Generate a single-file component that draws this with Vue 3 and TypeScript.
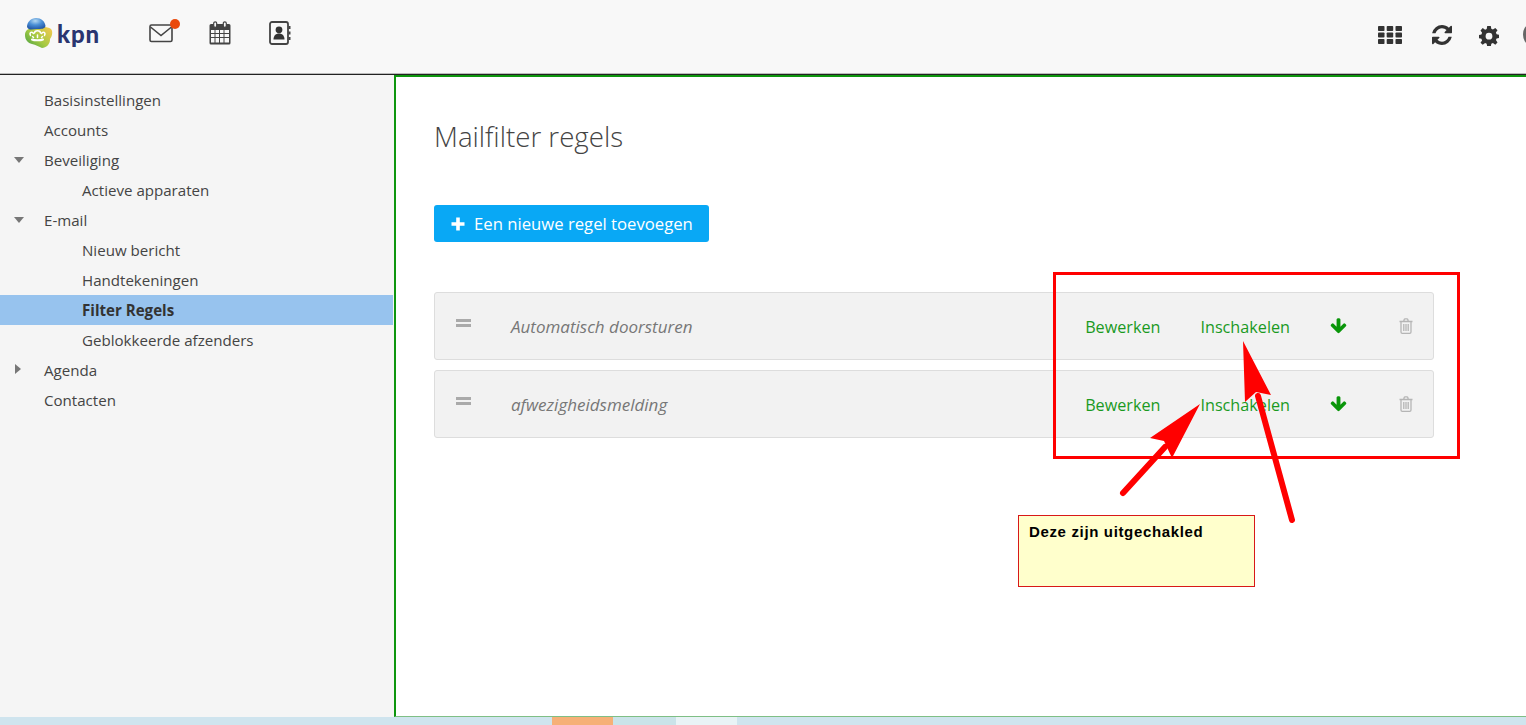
<script setup lang="ts">
interface NavItem { label: string; level: number; caret?: 'open' | 'closed'; active?: boolean }
const nav: NavItem[] = [
  { label: 'Basisinstellingen', level: 0 },
  { label: 'Accounts', level: 0 },
  { label: 'Beveiliging', level: 0, caret: 'open' },
  { label: 'Actieve apparaten', level: 1 },
  { label: 'E-mail', level: 0, caret: 'open' },
  { label: 'Nieuw bericht', level: 1 },
  { label: 'Handtekeningen', level: 1 },
  { label: 'Filter Regels', level: 1, active: true },
  { label: 'Geblokkeerde afzenders', level: 1 },
  { label: 'Agenda', level: 0, caret: 'closed' },
  { label: 'Contacten', level: 0 },
]
const rules = ['Automatisch doorsturen', 'afwezigheidsmelding']
</script>

<template>
  <div class="page">
    <header class="top">
      <div class="logo">
        <svg width="30" height="32" viewBox="0 0 30 32">
          <defs>
            <linearGradient id="lg1" x1="0" y1="1" x2="1" y2="0.200">
              <stop offset="0" stop-color="#3c9a45" />
              <stop offset="0.5" stop-color="#a4ca42" />
              <stop offset="1" stop-color="#ecc94e" />
            </linearGradient>
            <radialGradient id="lg2" cx="0.450" cy="0.250" r="0.800">
              <stop offset="0" stop-color="#b5d9f2" />
              <stop offset="0.450" stop-color="#4a8fd6" />
              <stop offset="1" stop-color="#1d4f9f" />
            </radialGradient>
          </defs>
          <path d="M1 18 C1 14 4 11 8 12 C13 10 23 9 27 12 C29 14 28.500 19 26 22 C26.500 27 22 31 18 31 C14 29 12 28 8 27 C4 26 1 23 1 18Z" fill="url(#lg1)" />
          <path d="M3 10 C3 5 7 1 12 1 C17 1 21 4 21.500 9 C21 12 17 12 13 12 C9 12 5 14 3 10Z" fill="url(#lg2)" />
          <g fill="none" stroke="#fff" stroke-width="1.500" stroke-linecap="round">
            <path d="M6.500 18.500 C5 15.500 8 14 9.500 16.500" />
            <path d="M10.500 16 C10.500 13 16.500 13 16.500 16" />
            <path d="M17.500 16.500 C19 14 22 15.500 20.500 18.500" />
            <path d="M8 22.500 C10 23.500 17 23.500 19 22.500" stroke-width="2" />
            <path d="M8.500 19.500 L9.500 20.500 M13.500 18 V20.500 M18.500 19.500 L17.500 20.500" />
          </g>
        </svg>
        <span class="kpn">kpn</span>
      </div>
      <nav class="apps">
        <span class="ico mail">
          <svg width="24" height="20" viewBox="0 0 24 20" fill="none" stroke="#444" stroke-width="1.600">
            <rect x="1" y="2" width="22" height="16.500" rx="1.500" />
            <path d="M1.500 4 L12 12.500 L22.500 4" />
          </svg>
          <i class="dot"></i>
        </span>
        <span class="ico">
          <svg width="22" height="24" viewBox="0 0 22 24">
            <path d="M2 3h18a1.500 1.500 0 0 1 1.500 1.500V22a1.500 1.500 0 0 1-1.500 1.500H2A1.500 1.500 0 0 1 .5 22V4.500A1.500 1.500 0 0 1 2 3z" fill="#444" />
            <path d="M2 9h3.500v3H2zM6.500 9H10v3H6.500zM11 9h3.500v3H11zM15.500 9H20v3h-4.500zM2 13h3.500v3H2zM6.500 13H10v3H6.500zM11 13h3.500v3H11zM15.500 13H20v3h-4.500zM2 17h3.500v4.500H2zM6.500 17H10v4.500H6.500zM11 17h3.500v4.500H11zM15.500 17H20v4.500h-4.500z" fill="#f8f8f8" />
            <rect x="4.700" y="0.800" width="3" height="5.500" rx="1.500" fill="#f8f8f8" stroke="#444" stroke-width="1.200" />
            <rect x="14.300" y="0.800" width="3" height="5.500" rx="1.500" fill="#f8f8f8" stroke="#444" stroke-width="1.200" />
          </svg>
        </span>
        <span class="ico">
          <svg width="22" height="24" viewBox="0 0 22 24">
            <rect x="1" y="1" width="18" height="22" rx="2" fill="none" stroke="#444" stroke-width="1.800" />
            <circle cx="10" cy="8.800" r="3.400" fill="#333" />
            <path d="M4.500 18.500c0-4 2.500-6 5.500-6s5.500 2 5.500 6z" fill="#333" />
            <path d="M19.500 5h2v3h-2zM19.500 10.500h2v3h-2zM19.500 16h2v3h-2z" fill="#444" />
          </svg>
        </span>
      </nav>
      <div class="tools">
        <svg class="t1" width="24" height="18" viewBox="0 0 24 18" fill="#333">
          <rect x="0" y="0" width="6.500" height="5" rx="0.800" /><rect x="8.700" y="0" width="6.500" height="5" rx="0.800" /><rect x="17.500" y="0" width="6.500" height="5" rx="0.800" />
          <rect x="0" y="6.500" width="6.500" height="5" rx="0.800" /><rect x="8.700" y="6.500" width="6.500" height="5" rx="0.800" /><rect x="17.500" y="6.500" width="6.500" height="5" rx="0.800" />
          <rect x="0" y="13" width="6.500" height="5" rx="0.800" /><rect x="8.700" y="13" width="6.500" height="5" rx="0.800" /><rect x="17.500" y="13" width="6.500" height="5" rx="0.800" />
        </svg>
        <svg class="t2" width="20" height="20" viewBox="0 0 1536 1536" fill="#333">
          <path d="M1511 928q0 5-1 7-64 268-268 434.500T764 1536q-146 0-282.500-55T238 1324l-129 129q-19 19-45 19t-45-19-19-45V960q0-26 19-45t45-19h448q26 0 45 19t19 45-19 45l-137 137q71 66 161 102t187 36q134 0 250-65t186-179q11-17 53-117 8-23 30-23h192q13 0 22.500 9.500t9.500 22.500zm25-800v448q0 26-19 45t-45 19h-448q-26 0-45-19t-19-45 19-45l138-138Q969 256 768 256q-134 0-250 65T332 500q-11 17-53 117-8 23-30 23H50q-13 0-22.500-9.500T18 608v-7q65-268 270-434.500T768 0q146 0 284 55.500T1297 212l130-129q19-19 45-19t45 19 19 45z" />
        </svg>
        <svg class="t3" width="20" height="20" viewBox="0 0 20 20">
          <path fill="#333" fill-rule="evenodd" d="M8.200 0h3.600l.5 2.800 1.600.7L16.300 1.900l2.200 2.300-1.600 2.300.7 1.700 2.400.5v3.200l-2.400.5-.7 1.700 1.600 2.300-2.200 2.300-2.400-1.600-1.600.7-.5 2.900H8.200l-.5-2.900-1.600-.7-2.400 1.600L1.500 16.700l1.600-2.300-.7-1.700L0 12.200V8.900l2.400-.5.700-1.700-1.600-2.300 2.200-2.300 2.400 1.600 1.600-.7zM10 6.800a3.400 3.400 0 1 0 0 6.800 3.400 3.400 0 0 0 0-6.800z" />
        </svg>
      </div>
      <i class="cut"></i>
    </header>

    <div class="body">
      <aside class="side">
        <div
          v-for="n in nav"
          :key="n.label"
          class="nav-item"
          :class="[`lvl${n.level}`, { active: n.active }]"
        >
          <i v-if="n.caret" class="caret" :class="n.caret"></i>
          {{ n.label }}
        </div>
      </aside>

      <main class="main">
        <h1 class="title">Mailfilter regels</h1>
        <button class="add">
          <svg width="14" height="14" viewBox="0 0 14 14" fill="#fff"><path d="M5.200 0.500h3.600v4.700h4.700v3.600H8.800v4.700H5.200V8.800H.5V5.200h4.700z" /></svg>
          Een nieuwe regel toevoegen
        </button>
        <div class="rules">
          <div v-for="r in rules" :key="r" class="rule">
            <span class="grip"><i></i><i></i></span>
            <span class="name">{{ r }}</span>
            <a class="act">Bewerken</a>
            <a class="act enable">Inschakelen</a>
            <svg class="move" width="17" height="18" viewBox="0 0 1664 1792" fill="#0a960a">
              <path d="M1611 832q0 53-37 90l-651 652q-39 37-91 37-53 0-90-37l-651-652q-38-36-38-90 0-53 38-91l74-75q39-37 91-37 53 0 90 37l294 295v-708q0-52 38-90t90-38h128q52 0 90 38t38 90v708l294-295q37-37 90-37 52 0 91 37l75 75q37 39 37 91z" />
            </svg>
            <svg class="trash" width="14" height="16" viewBox="0 0 14 16" fill="none" stroke="#b5b5b5" stroke-width="1.300">
              <path d="M0.500 3.500h13M2 3.500V14a1.300 1.300 0 0 0 1.300 1.300h7.400A1.300 1.300 0 0 0 12 14V3.500M4.700 3.300 5.300 1.300A.8.8 0 0 1 6 .8h2a.8.8 0 0 1 .7.5l.6 2M4.800 6v7M7 6v7M9.200 6v7" />
            </svg>
          </div>
        </div>
      </main>
    </div>

    <footer class="strip">
      <i class="s-orange"></i>
      <i class="s-a"></i>
      <i class="s-light"></i>
    </footer>

    <div class="mark-box"></div>
    <svg class="arrows" width="1526" height="725" viewBox="0 0 1526 725">
      <path d="M1123 493 L1165 447" stroke="#f00" stroke-width="6" stroke-linecap="round" fill="none" />
      <path d="M1200 404 L1150 438 L1164 441 L1172 458Z" fill="#f00" />
      <path d="M1292 520 L1258 396" stroke="#f00" stroke-width="6" stroke-linecap="round" fill="none" />
      <path d="M1243 341 L1245 402 L1256 392 L1271 395Z" fill="#f00" />
    </svg>
    <div class="note">Deze zijn uitgechakled</div>
  </div>
</template>

<style>
html, body { margin: 0; padding: 0; overflow: hidden; }
</style>

<style scoped>
.page {
  position: relative;
  width: 1526px;
  height: 725px;
  overflow: hidden;
  display: flex;
  flex-direction: column;
  background: #fff;
  font-family: "Open Sans", "Liberation Sans", sans-serif;
  color: #444;
}
.top {
  position: relative;
  flex: 0 0 75px;
  box-sizing: border-box;
  height: 75px;
  background: #f8f8f8;
  border-bottom: 1px solid #222;
  box-shadow: inset 0 -1px 0 #bbb;
  display: flex;
  align-items: flex-start;
}
.logo {
  display: flex;
  align-items: center;
  margin: 17px 0 0 24px;
  width: 125px;
  height: 32px;
}
.kpn {
  font-family: "Lato", "Open Sans", sans-serif;
  font-weight: 900;
  font-size: 24px;
  line-height: 32px;
  color: #2a3570;
  margin-left: 3px;
  margin-top: 1px;
  letter-spacing: 0.800px;
}
.apps {
  display: flex;
  gap: 36px;
  margin-top: 21px;
  align-items: flex-start;
}
.ico { position: relative; display: block; width: 24px; height: 24px; }
.mail svg { display: block; margin-top: 2px; }
.dot {
  position: absolute;
  top: -2px;
  left: 21px;
  width: 10px;
  height: 10px;
  border-radius: 50%;
  background: #ea4a0c;
}
.tools {
  margin-left: auto;
  margin-right: 27px;
  display: flex;
  align-items: flex-start;
  margin-top: 26px;
}
.t2 { margin: -1px 0 0 30px; }
.t3 { margin: 0 0 0 27px; }
.t1, .t2, .t3 { display: block; }
.cut {
  position: absolute;
  right: -9px;
  top: 25px;
  width: 12px;
  height: 19px;
  border-radius: 50%;
  background: #666;
}
.body {
  flex: 1 1 auto;
  display: flex;
  min-height: 0;
}
.side {
  flex: 0 0 394px;
  background: #f5f5f5;
  box-sizing: border-box;
  padding-top: 10px;
}
.nav-item {
  position: relative;
  height: 30px;
  line-height: 30px;
  font-size: 15.100px;
  color: #444;
  white-space: nowrap;
}
.lvl0 { padding-left: 44px; }
.lvl1 { padding-left: 82px; }
.active { background: #97c3ee; font-weight: 700; color: #333; margin-right: 1px; }
.caret { position: absolute; width: 0; height: 0; border-style: solid; }
.caret.open {
  left: 14px;
  top: 12px;
  border-width: 6px 5.500px 0 5.500px;
  border-color: #777 transparent transparent transparent;
}
.caret.closed {
  left: 15px;
  top: 9px;
  border-width: 5.500px 0 5.500px 6px;
  border-color: transparent transparent transparent #777;
}
.main {
  flex: 1 1 auto;
  box-sizing: border-box;
  border-left: 2px solid #0e960e;
  border-top: 2px solid #0e960e;
  border-bottom: 1px solid #7fbf85;
  padding: 0 92px 0 38px;
  min-width: 0;
}
.title {
  margin: 40px 0 0;
  font-weight: 300;
  font-size: 27.700px;
  line-height: 38px;
  color: #444;
}
.add {
  display: flex;
  align-items: center;
  gap: 9px;
  box-sizing: border-box;
  width: 275px;
  height: 37px;
  margin-top: 50px;
  padding: 0 0 0 17px;
  border: 0;
  border-radius: 3px;
  background: #09a8f5;
  color: #fff;
  font-family: inherit;
  font-size: 16.700px;
  white-space: nowrap;
}
.rules {
  margin-top: 50px;
  display: flex;
  flex-direction: column;
  gap: 10.500px;
}
.rule {
  box-sizing: border-box;
  height: 67.500px;
  padding-top: 3px;
  display: flex;
  align-items: center;
  background: #f2f2f2;
  border: 1px solid #ddd;
  border-radius: 3px;
}
.grip {
  display: flex;
  flex-direction: column;
  gap: 2px;
  width: 15px;
  margin: -8px 0 0 21px;
}
.grip i { display: block; height: 3px; background: #aaa; }
.name {
  margin: -1px 0 0 40px;
  font-style: italic;
  font-size: 17px;
  color: #777;
  flex: 1 1 auto;
}
.act { font-size: 16.200px; color: #1a9a1f; white-space: nowrap; }
.enable { margin-left: 40px; }
.move { margin: -2px 0 0 40px; }
.trash { margin: -3px 20px 0 52px; }
.strip {
  flex: 0 0 8px;
  background: #cfe4ee;
  position: relative;
  display: flex;
  padding-left: 552px;
}
.strip i { display: block; height: 8px; }
.s-orange { width: 61px; background: #f6b077; }
.s-a { width: 63px; background: #cae3e9; }
.s-light { width: 61px; background: #e9f3f6; }
.mark-box {
  position: absolute;
  left: 1053px;
  top: 272px;
  width: 407px;
  height: 187px;
  box-sizing: border-box;
  border: 3px solid #f00;
}
.arrows { position: absolute; left: 0; top: 0; pointer-events: none; }
.note {
  position: absolute;
  left: 1018px;
  top: 515px;
  width: 237px;
  height: 72px;
  box-sizing: border-box;
  padding: 7px 10px;
  background: #ffc;
  border: 1px solid #d81818;
  font-family: "Liberation Sans", Arial, sans-serif;
  font-weight: 700;
  font-size: 15px;
  letter-spacing: 0.650px;
  line-height: 18px;
  color: #000;
}
</style>
